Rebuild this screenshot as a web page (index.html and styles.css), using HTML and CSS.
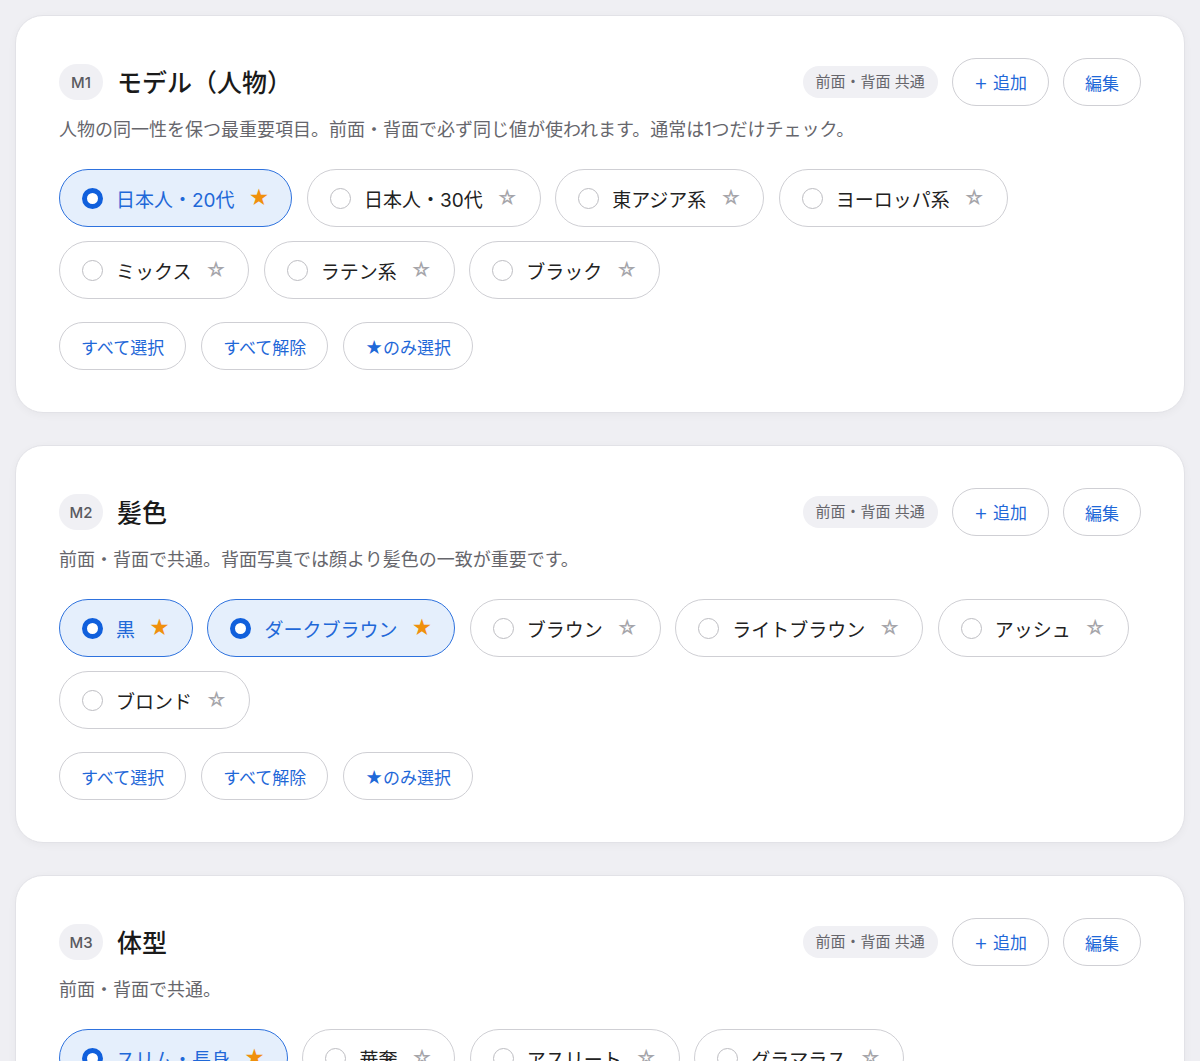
FILE: index.html
```html
<!DOCTYPE html>
<html lang="ja">
<head>
    <meta charset="UTF-8">
    <meta name="viewport" content="width=device-width, initial-scale=1.0">
    <title>モデル設定</title>
    <link rel="stylesheet" href="styles.css">
</head>
<body>
    <div class="page">

        <section class="card">
            <div class="card-head">
                <div class="head-left">
                    <span class="code">M1</span>
                    <h2 class="card-title">モデル（人物）</h2>
                </div>
                <div class="head-right">
                    <span class="scope">前面・背面 共通</span>
                    <button class="btn"><span class="plus">+</span> 追加</button>
                    <button class="btn">編集</button>
                </div>
            </div>
            <p class="desc">人物の同一性を保つ最重要項目。前面・背面で必ず同じ値が使われます。通常は1つだけチェック。</p>
            <div class="chips">
                <div class="chip on"><span class="radio"></span><span class="chip-text">日本人・20代</span><span class="star">★</span></div>
                <div class="chip"><span class="radio"></span><span class="chip-text">日本人・30代</span><span class="star">☆</span></div>
                <div class="chip"><span class="radio"></span><span class="chip-text">東アジア系</span><span class="star">☆</span></div>
                <div class="chip"><span class="radio"></span><span class="chip-text">ヨーロッパ系</span><span class="star">☆</span></div>
                <div class="chip"><span class="radio"></span><span class="chip-text">ミックス</span><span class="star">☆</span></div>
                <div class="chip"><span class="radio"></span><span class="chip-text">ラテン系</span><span class="star">☆</span></div>
                <div class="chip"><span class="radio"></span><span class="chip-text">ブラック</span><span class="star">☆</span></div>
            </div>
            <div class="actions">
                <button class="btn btn-sm">すべて選択</button>
                <button class="btn btn-sm">すべて解除</button>
                <button class="btn btn-sm">★のみ選択</button>
            </div>
        </section>

        <section class="card">
            <div class="card-head">
                <div class="head-left">
                    <span class="code">M2</span>
                    <h2 class="card-title">髪色</h2>
                </div>
                <div class="head-right">
                    <span class="scope">前面・背面 共通</span>
                    <button class="btn"><span class="plus">+</span> 追加</button>
                    <button class="btn">編集</button>
                </div>
            </div>
            <p class="desc">前面・背面で共通。背面写真では顔より髪色の一致が重要です。</p>
            <div class="chips">
                <div class="chip on"><span class="radio"></span><span class="chip-text">黒</span><span class="star">★</span></div>
                <div class="chip on"><span class="radio"></span><span class="chip-text">ダークブラウン</span><span class="star">★</span></div>
                <div class="chip"><span class="radio"></span><span class="chip-text">ブラウン</span><span class="star">☆</span></div>
                <div class="chip"><span class="radio"></span><span class="chip-text">ライトブラウン</span><span class="star">☆</span></div>
                <div class="chip"><span class="radio"></span><span class="chip-text">アッシュ</span><span class="star">☆</span></div>
                <div class="chip"><span class="radio"></span><span class="chip-text">ブロンド</span><span class="star">☆</span></div>
            </div>
            <div class="actions">
                <button class="btn btn-sm">すべて選択</button>
                <button class="btn btn-sm">すべて解除</button>
                <button class="btn btn-sm">★のみ選択</button>
            </div>
        </section>

        <section class="card">
            <div class="card-head">
                <div class="head-left">
                    <span class="code">M3</span>
                    <h2 class="card-title">体型</h2>
                </div>
                <div class="head-right">
                    <span class="scope">前面・背面 共通</span>
                    <button class="btn"><span class="plus">+</span> 追加</button>
                    <button class="btn">編集</button>
                </div>
            </div>
            <p class="desc">前面・背面で共通。</p>
            <div class="chips">
                <div class="chip on"><span class="radio"></span><span class="chip-text">スリム・長身</span><span class="star">★</span></div>
                <div class="chip"><span class="radio"></span><span class="chip-text">華奢</span><span class="star">☆</span></div>
                <div class="chip"><span class="radio"></span><span class="chip-text">アスリート</span><span class="star">☆</span></div>
                <div class="chip"><span class="radio"></span><span class="chip-text">グラマラス</span><span class="star">☆</span></div>
            </div>
            <div class="actions">
                <button class="btn btn-sm">すべて選択</button>
                <button class="btn btn-sm">すべて解除</button>
                <button class="btn btn-sm">★のみ選択</button>
            </div>
        </section>

    </div>
</body>
</html>
```

FILE: styles.css
```css
* {
    box-sizing: border-box;
}

body {
    margin: 0;
    background: #efeff3;
    font-family: Inter, "Noto Sans CJK JP", sans-serif;
    color: #1c1c1e;
}

.page {
    padding: 15px;
    display: flex;
    flex-direction: column;
    gap: 32px;
}

.card {
    background: #fff;
    border: 1px solid #e2e2e7;
    border-radius: 28px;
    padding: 42px 43px;
    box-shadow: 0 2px 8px rgba(0, 0, 0, 0.04);
}

.card-head {
    display: flex;
    justify-content: space-between;
    align-items: center;
    height: 48px;
}

.head-left {
    display: flex;
    align-items: center;
    gap: 14px;
}

.code {
    display: flex;
    align-items: center;
    justify-content: center;
    width: 44px;
    height: 36px;
    border-radius: 18px;
    background: #f0f0f4;
    color: #5a5a60;
    font-size: 15px;
    font-weight: 500;
}

.card-title {
    margin: 0 0 3px;
    font-size: 25px;
    font-weight: 500;
    color: #1a1a1a;
}

.head-right {
    display: flex;
    align-items: center;
    gap: 14px;
}

.scope {
    height: 32px;
    line-height: 32px;
    padding: 0 13px;
    border-radius: 16px;
    background: #f0f0f4;
    color: #66666c;
    font-size: 15px;
}

.btn {
    height: 48px;
    padding: 0 21px;
    border: 1.5px solid #cfcfd4;
    border-radius: 24px;
    background: #fff;
    color: #1f68d8;
    font-family: inherit;
    font-size: 17px;
}

.plus {
    font-size: 22px;
    font-weight: 300;
    vertical-align: -1px;
}

.desc {
    margin: 12px 0 0;
    line-height: 24px;
    font-size: 18px;
    color: #66666c;
}

.chips {
    display: flex;
    flex-wrap: wrap;
    gap: 14px 14.5px;
    margin-top: 27px;
}

.chip {
    display: flex;
    align-items: center;
    height: 58px;
    padding: 0 22px;
    border: 1.5px solid #cfcfd4;
    border-radius: 29px;
    background: #fff;
    font-size: 19px;
    color: #222;
}

.radio {
    width: 21px;
    height: 21px;
    border-radius: 50%;
    border: 1.5px solid #bdbdc2;
    margin-right: 13px;
}

.star {
    margin-left: 14px;
    font-size: 20px;
    color: #a5a5aa;
}

.chip.on {
    background: #e5effc;
    border-color: #2e72de;
    color: #1f68d8;
}

.chip.on .radio {
    border: 5.5px solid #1160dc;
    background: #fff;
}

.chip.on .star {
    color: #f0900c;
}

.actions {
    display: flex;
    gap: 15px;
    margin-top: 23px;
}
```
